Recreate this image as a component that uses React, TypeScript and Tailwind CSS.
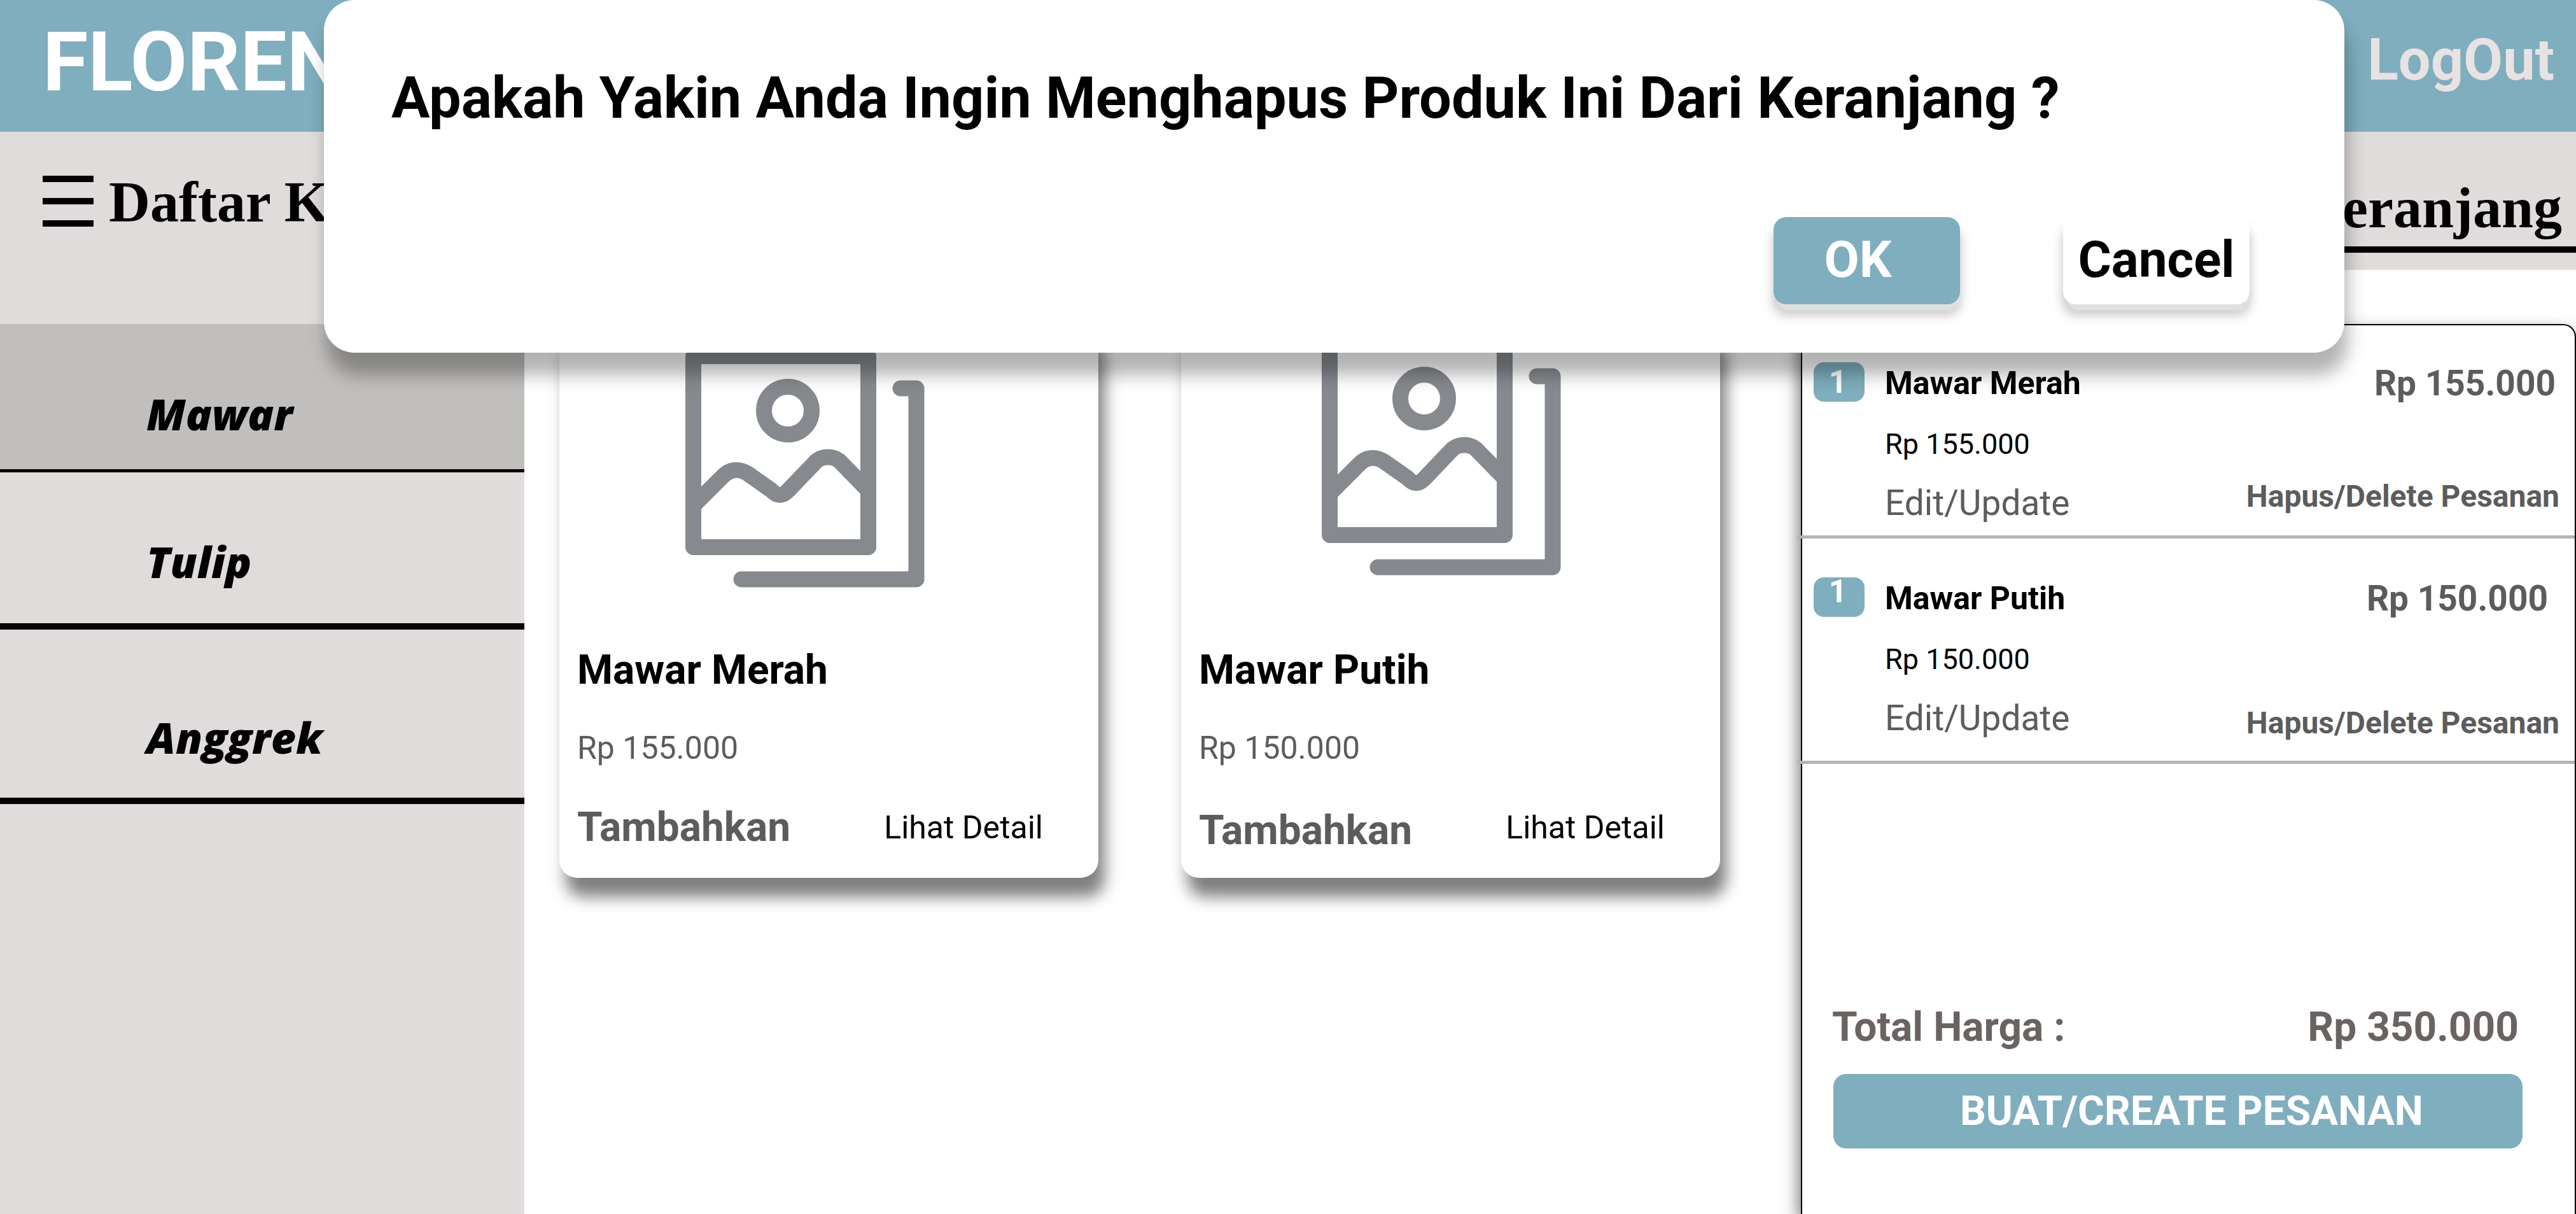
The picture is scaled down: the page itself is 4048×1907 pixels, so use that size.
type Product = {
  name: string;
  price: string;
  iconClass: string;
  addClass: string;
};

const products: Product[] = [
  { name: "Mawar Merah", price: "Rp 155.000", iconClass: "ml-[198px] mt-[38px] mb-[92px]", addClass: "pb-1" },
  { name: "Mawar Putih", price: "Rp 150.000", iconClass: "ml-[221px] mt-[19px] mb-[111px]", addClass: "pt-1.5" },
];

const categories = [
  { name: "Mawar", rowClass: "h-[233px] border-b-[5px] bg-[#c0bfbd] pt-[114px]" },
  { name: "Tulip", rowClass: "h-[247px] border-b-[10px] pt-[113px]" },
  { name: "Anggrek", rowClass: "h-[274px] border-b-[10px] pt-[142px]" },
];

const cartItems = [
  {
    name: "Mawar Merah",
    price: "Rp 155.000",
    rowClass: "h-[335px] pt-[58px]",
    countClass: "leading-[62px]",
    totalClass: "mr-4",
    deleteClass: "-mt-1",
  },
  {
    name: "Mawar Putih",
    price: "Rp 150.000",
    rowClass: "h-[354px] pt-[61px]",
    countClass: "leading-[44px]",
    totalClass: "mr-7",
    deleteClass: "mt-3.5",
  },
];

function PictureIcon({ className }: { className: string }) {
  return (
    <svg
      viewBox="0 0 376 376"
      className={`block h-[376px] w-[376px] ${className}`}
      fill="none"
      stroke="#868a8e"
      strokeWidth="25"
      strokeLinecap="round"
      strokeLinejoin="round"
      aria-hidden="true"
    >
      <rect x="12.5" y="12.5" width="275" height="300" />
      <circle cx="161" cy="98" r="37.5" />
      <path
        strokeLinecap="butt"
        d="M13 247 L58 202 C69 190 84 188 98 197 L135 223 C144 233 153 233 162 223 L206 177 C216 169 232 169 242 177 L287 223"
      />
      <path d="M338 63 H363 V363 H88" />
    </svg>
  );
}

function ProductCard({ product }: { product: Product }) {
  return (
    <article className="flex-1 rounded-[28px] bg-white shadow-[10px_30px_24px_rgba(0,0,0,0.5)]">
      <div className="overflow-hidden">
        <PictureIcon className={product.iconClass} />
      </div>
      <div className="pb-[37px] pl-7 pr-[87px]">
        <h3 className="text-[64px] font-bold leading-[76px]">{product.name}</h3>
        <p className="mt-[54px] text-[50px] leading-[60px] text-[#5c5c5c]">{product.price}</p>
        <div className="mt-14 flex h-[81px] items-center justify-between">
          <button type="button" className={`text-[64px] font-bold leading-[76px] text-[#5c5c5c] ${product.addClass}`}>
            Tambahkan
          </button>
          <button type="button" className="pb-1 text-[50px] leading-[60px]">
            Lihat Detail
          </button>
        </div>
      </div>
    </article>
  );
}

function CartRow({ item }: { item: (typeof cartItems)[number] }) {
  return (
    <li className={`-ml-2 flex gap-8 border-b-[5px] border-[#b4b4b4] pl-[26px] ${item.rowClass}`}>
      <span
        className={`h-[62px] w-20 shrink-0 rounded-2xl bg-[#7faebe] pr-1 text-center text-[50px] font-bold text-white ${item.countClass}`}
      >
        1
      </span>
      <div className="min-w-0 grow">
        <div className="flex items-center justify-between">
          <h3 className="text-[50px] font-bold leading-[66px]">{item.name}</h3>
          <span className={`pr-3.5 text-[55px] font-bold leading-[66px] text-[#5c5c5c] ${item.totalClass}`}>
            {item.price}
          </span>
        </div>
        <p className="mt-9 text-[45px] leading-[54px]">{item.price}</p>
        <div className="mt-8 flex items-start justify-between pr-6">
          <button type="button" className="text-[55px] leading-[66px] text-[#5c5c5c]">
            Edit/Update
          </button>
          <button type="button" className={`text-[48px] font-bold leading-[54px] text-[#5c5c5c] ${item.deleteClass}`}>
            Hapus/Delete Pesanan
          </button>
        </div>
      </div>
    </li>
  );
}

function ConfirmDialog() {
  return (
    <div
      role="dialog"
      aria-modal="true"
      aria-labelledby="confirm-title"
      className="absolute left-[509px] right-[364px] top-0 rounded-[48px] bg-white pb-[76px] pl-[106px] pr-[149px] pt-[102px] shadow-[5px_35px_28px_rgba(0,0,0,0.3)]"
    >
      <h2 id="confirm-title" className="text-[90px] font-bold leading-[106px]">
        Apakah Yakin Anda Ingin Menghapus Produk Ini Dari Keranjang ?
      </h2>
      <div className="mt-[133px] flex justify-end gap-[162px]">
        <button
          type="button"
          className="h-[137px] w-[293px] rounded-[20px] bg-[#7faebe] pb-1 pr-7 text-[80px] font-bold text-white shadow-[3px_13px_3px_-3px_#e0e0e0,0_16px_18px_rgba(0,0,0,0.25)]"
        >
          OK
        </button>
        <button
          type="button"
          className="h-[137px] w-[293px] rounded-[20px] bg-white pb-1 text-[80px] font-bold shadow-[3px_13px_3px_-3px_#e0e0e0,0_16px_18px_rgba(0,0,0,0.25)]"
        >
          Cancel
        </button>
      </div>
    </div>
  );
}

export default function App() {
  return (
    <div className="relative flex min-h-screen flex-col overflow-hidden bg-white font-['Roboto',sans-serif] text-black">
      <header className="flex h-[207px] items-start justify-between bg-[#7faebe] pl-[67px] pr-[34px]">
        <h1 className="pt-[22px] text-[130px] font-bold leading-[152px] text-white">FLOREN</h1>
        <a href="#logout" className="pt-[42px] text-[90px] font-bold leading-[106px] text-[#e8e2e2]">
          LogOut
        </a>
      </header>

      <div className="flex grow">
        <nav className="w-[824px] shrink-0 bg-[#e0dcdb]">
          <div className="flex h-[302px] items-start gap-6 whitespace-nowrap pl-[67px] pt-[58px] font-['Liberation_Serif',serif]">
            <button type="button" aria-label="Menu" className="mt-[11px] flex w-20 shrink-0 flex-col gap-[25px]">
              <span className="h-[10px] w-full bg-black" />
              <span className="h-[10px] w-full bg-black" />
              <span className="h-[10px] w-full bg-black" />
            </button>
            <h2 className="text-[90px] font-bold leading-[106px]">Daftar Kategori</h2>
          </div>
          <ul className="font-['Open_Sans',sans-serif] text-[68px] font-extrabold italic leading-[54px]">
            {categories.map((category) => (
              <li key={category.name} className={`border-black pl-[230px] ${category.rowClass}`}>
                <a href={`#${category.name.toLowerCase()}`}>{category.name}</a>
              </li>
            ))}
          </ul>
        </nav>

        <div className="flex min-w-0 grow flex-col">
          <div className="flex h-[217px] items-start justify-end bg-[#e0dcdb]">
            <h2 className="w-[1218px] border-b-[10px] border-black pb-1 pr-[22px] pt-[63px] text-right font-['Liberation_Serif',serif] text-[90px] font-bold leading-[113px]">
              Keranjang
            </h2>
          </div>
          <div className="flex grow gap-[127px] pl-[55px] pt-[85px]">
            <main className="flex grow items-start gap-[130px]">
              {products.map((product) => (
                <ProductCard key={product.name} product={product} />
              ))}
            </main>
            <aside className="w-[1218px] shrink-0 rounded-t-[20px] border-x-2 border-t-2 border-black bg-white shadow-[-5px_10px_24px_rgba(0,0,0,0.5)]">
              <ul>
                {cartItems.map((item) => (
                  <CartRow key={item.name} item={item} />
                ))}
              </ul>
              <div className="mt-[376px] flex justify-between pl-[47px] pr-[88px] text-[64px] font-bold leading-[76px] text-[#6b6362]">
                <span>Total Harga :</span>
                <span>Rp 350.000</span>
              </div>
              <div className="mt-[35px] flex pl-[49px] pr-[82px]">
                <button
                  type="button"
                  className="h-[117px] grow rounded-[20px] bg-[#7faebe] pl-[43px] text-[64px] font-bold text-white"
                >
                  BUAT/CREATE PESANAN
                </button>
              </div>
            </aside>
          </div>
        </div>
      </div>

      <ConfirmDialog />
    </div>
  );
}
